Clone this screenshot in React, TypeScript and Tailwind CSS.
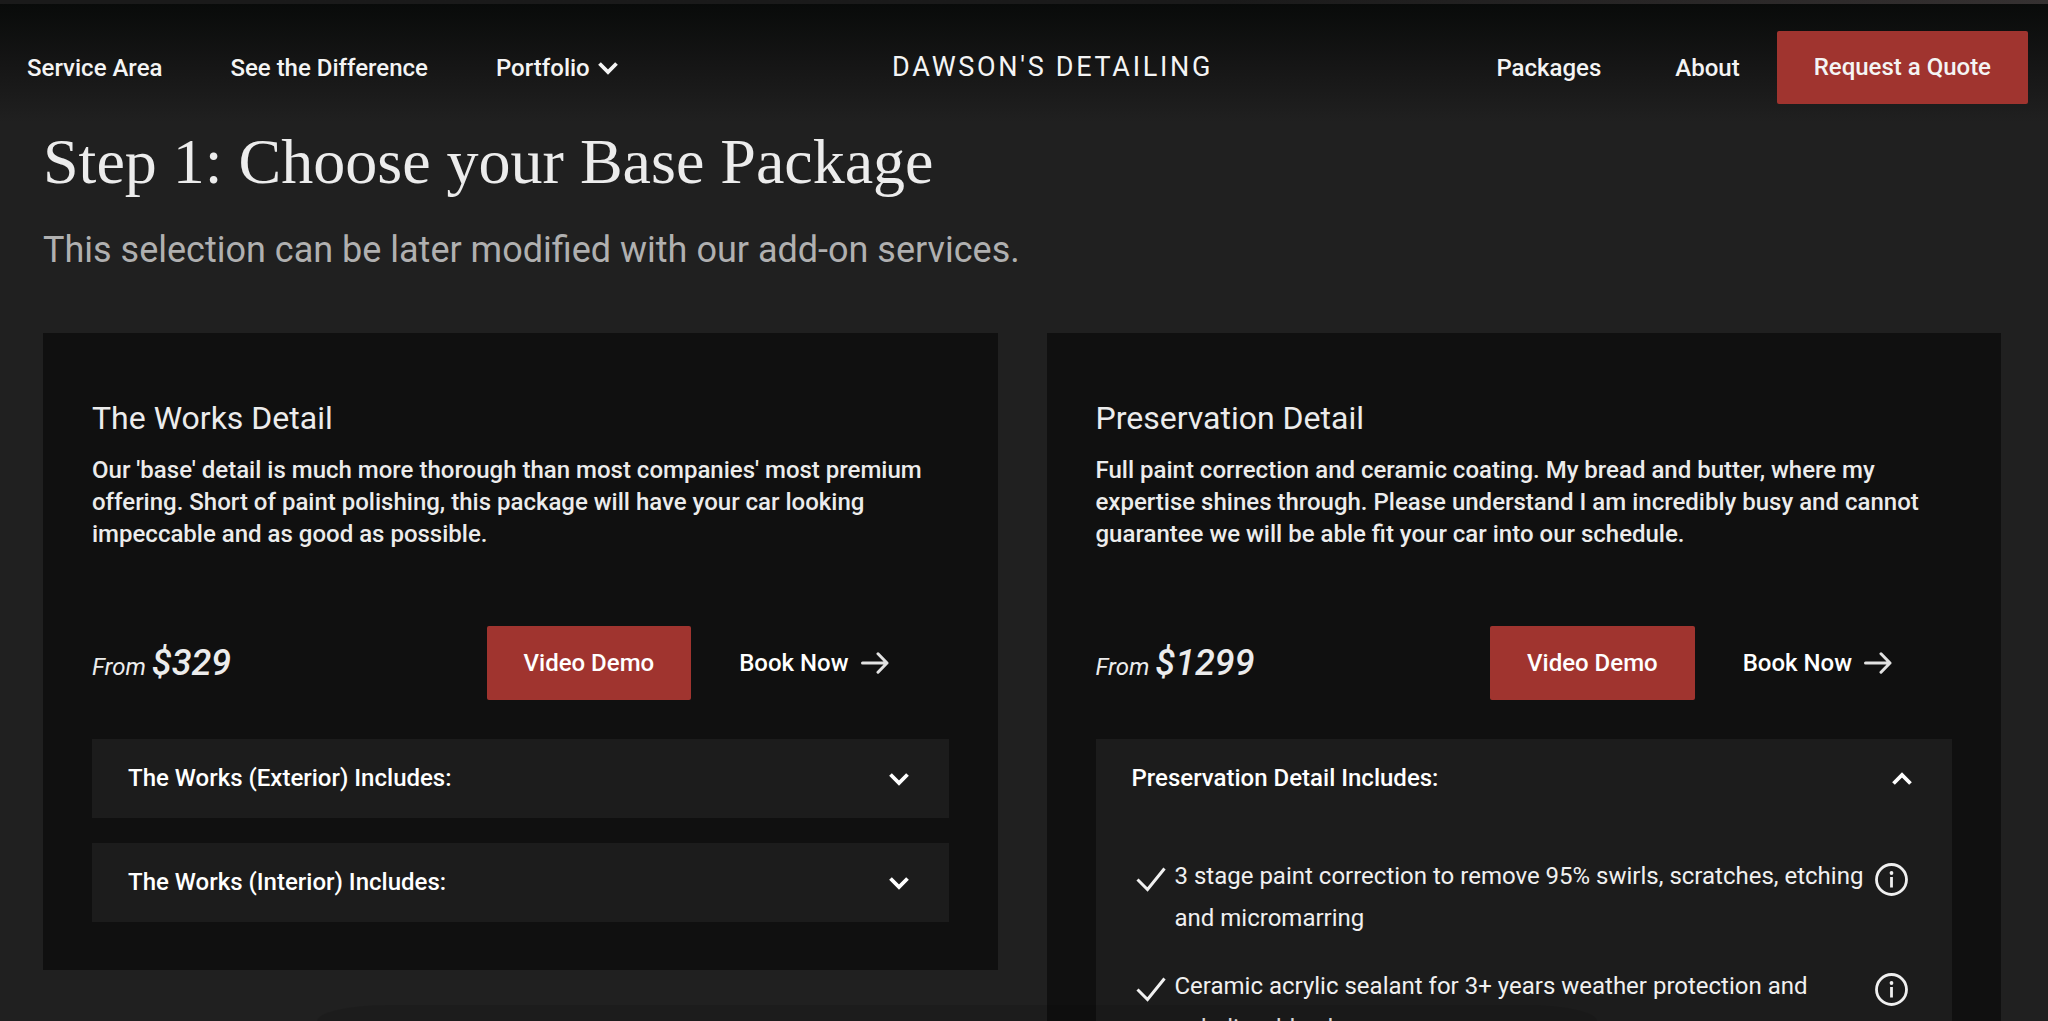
import React, { useState } from 'react';

type IncludedItem = {
    text: string;
};

type Section = {
    title: string;
    items: IncludedItem[];
    defaultOpen?: boolean;
};

type Package = {
    name: string;
    description: string;
    price: string;
    sections: Section[];
};

const packages: Package[] = [
    {
        name: 'The Works Detail',
        description:
            "Our 'base' detail is much more thorough than most companies' most premium offering. Short of paint polishing, this package will have your car looking impeccable and as good as possible.",
        price: '$329',
        sections: [
            { title: 'The Works (Exterior) Includes:', items: [] },
            { title: 'The Works (Interior) Includes:', items: [] },
        ],
    },
    {
        name: 'Preservation Detail',
        description:
            'Full paint correction and ceramic coating. My bread and butter, where my expertise shines through. Please understand I am incredibly busy and cannot guarantee we will be able fit your car into our schedule.',
        price: '$1299',
        sections: [
            {
                title: 'Preservation Detail Includes:',
                defaultOpen: true,
                items: [
                    { text: '3 stage paint correction to remove 95% swirls, scratches, etching and micromarring' },
                    { text: 'Ceramic acrylic sealant for 3+ years weather protection and unbelievable gloss' },
                ],
            },
        ],
    },
];

const Chevron = ({ open = false }: { open?: boolean }) => (
    <svg width="20" height="14" viewBox="0 0 20 14" fill="none" stroke="currentColor" strokeWidth="3.8" aria-hidden="true">
        {open ? <path d="M1.5 11.5 10 3l8.5 8.5" /> : <path d="M1.5 2.5 10 11l8.5-8.5" />}
    </svg>
);

const Arrow = () => (
    <svg width="28" height="22" viewBox="0 0 28 22" fill="none" stroke="#e2e2e2" strokeWidth="3" strokeLinecap="round" strokeLinejoin="round" aria-hidden="true">
        <path d="M1.5 11h24.5M17 1.8 26 11l-9 9.2" />
    </svg>
);

const Check = () => (
    <svg className="mt-3 shrink-0" width="30" height="26" viewBox="0 0 30 26" fill="none" stroke="currentColor" strokeWidth="3" aria-hidden="true">
        <path d="M1.5 12.5 11.5 22.5 28.5 1.5" />
    </svg>
);

const Info = () => (
    <svg width="33" height="33" viewBox="0 0 33 33" fill="none" stroke="currentColor" aria-hidden="true">
        <circle cx="16.5" cy="16.5" r="15" strokeWidth="2.8" />
        <path d="M16.5 14v10.5" strokeWidth="2.8" />
        <circle cx="16.5" cy="10" r="1.9" fill="currentColor" stroke="none" />
    </svg>
);

const Accordion = ({ title, items, defaultOpen = false }: Section) => {
    const [open, setOpen] = useState(defaultOpen);

    return (
        <div className="bg-[#1c1c1c]">
            <button
                type="button"
                aria-expanded={open}
                onClick={() => setOpen(!open)}
                className="flex w-full items-center justify-between py-6 pl-9 pr-10 text-left font-medium leading-[31px]"
            >
                {title}
                <Chevron open={open} />
            </button>
            {open && (
                <ul className="space-y-[26px] pb-9 pl-10 pr-11 pt-[37px] leading-[42px] text-[#f0f0f0]">
                    {items.map((item) => (
                        <li key={item.text} className="flex items-start">
                            <Check />
                            <span className="ml-[9px] flex-1">{item.text}</span>
                            <button type="button" aria-label="More info" className="ml-2 mt-2 shrink-0">
                                <Info />
                            </button>
                        </li>
                    ))}
                </ul>
            )}
        </div>
    );
};

const PackageCard = ({ name, description, price, sections }: Package) => (
    <article className="bg-[#101010] px-[49px] pb-12 pt-[65px]">
        <h2 className="text-[32px] leading-10 text-[#ececec]">{name}</h2>
        <p className="mt-4 font-medium leading-8 text-[#ececec]">{description}</p>
        <div className="mt-[76px] flex items-center justify-between pr-[60px]">
            <p className="italic text-[#ececec]">
                From <span className="text-4xl font-medium">{price}</span>
            </p>
            <div className="flex items-center gap-12">
                <a href="#video" className="rounded-xs bg-[#a0342f] px-[37px] py-5 font-medium leading-[34px]">
                    Video Demo
                </a>
                <a href="#book" className="flex items-center gap-3 font-medium">
                    Book Now
                    <Arrow />
                </a>
            </div>
        </div>
        <div className="mt-[39px] space-y-[25px]">
            {sections.map((section) => (
                <Accordion key={section.title} {...section} />
            ))}
        </div>
    </article>
);

const Header = () => (
    <header>
        <div className="h-1 bg-linear-to-r from-[#1a1a1a] from-60% to-[#353131]" />
        <div className="flex items-center justify-between bg-linear-to-b from-[#090b0a] via-[#151515] to-[#202020] pb-[18px] pl-[27px] pr-5 pt-[27px] font-medium text-[#f4f4f4]">
            <nav className="flex items-center gap-[68px] pr-7">
                <a href="#area">Service Area</a>
                <a href="#difference">See the Difference</a>
                <button type="button" className="flex items-center gap-2">
                    Portfolio
                    <Chevron />
                </button>
            </nav>
            <a href="#home" className="text-[27px] font-normal uppercase tracking-widest">
                Dawson's Detailing
            </a>
            <nav className="flex items-center">
                <a href="#packages" className="px-[37px]">Packages</a>
                <a href="#about" className="px-[37px]">About</a>
                <a href="#quote" className="rounded-xs bg-[#a0342f] px-[37px] py-5 leading-[33px]">
                    Request a Quote
                </a>
            </nav>
        </div>
    </header>
);

const App = () => {
    return (
        <div className='min-h-screen bg-[#202020] font-["Roboto",sans-serif] text-2xl text-white'>
            <Header />
            <main className="pb-16 pl-[43px] pr-[47px]">
                <h1 className='font-["Liberation_Serif",serif] text-[64px] leading-20 text-[#ececec]'>
                    Step 1: Choose your Base Package
                </h1>
                <p className="mt-[26px] text-4xl leading-11 text-[#b0b0b0]">
                    This selection can be later modified with our add-on services.
                </p>
                <div className="mt-[61px] grid grid-cols-2 items-start gap-[49px]">
                    {packages.map((pkg) => (
                        <PackageCard key={pkg.name} {...pkg} />
                    ))}
                </div>
            </main>
            {/* faint shade rising from the bottom edge */}
            <div className="pointer-events-none fixed bottom-0 left-[15.5%] right-[22%] h-4 rounded-[70px_70px_0_0/16px_16px_0_0] bg-black/10" />
        </div>
    );
};

export default App;
